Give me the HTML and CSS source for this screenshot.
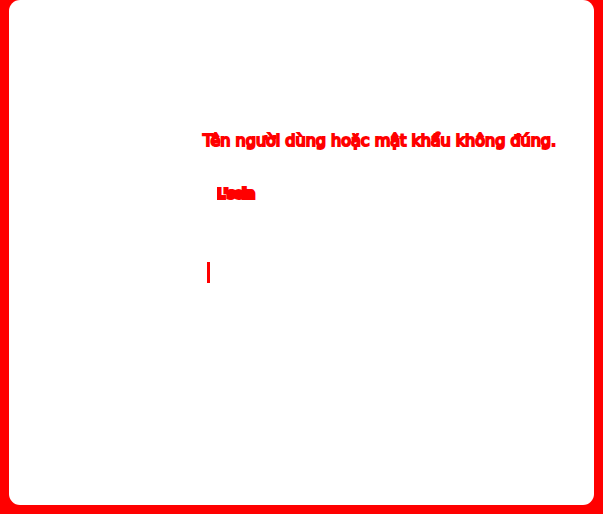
FILE: index.html
```html
<!DOCTYPE html>
<html lang="vi">
<head>
<meta charset="utf-8">
<title>Login</title>
<link rel="stylesheet" href="styles.css">
</head>
<body>
<main class="panel">
<form class="login">
<p class="error" role="alert">Tên người dùng hoặc mật khẩu không đúng.</p>
<input class="field" type="text" value="L'sein" aria-label="Tên người dùng" spellcheck="false">
<div class="password">
<span class="caret"></span>
<input class="field" type="password" aria-label="Mật khẩu">
</div>
</form>
</main>
</body>
</html>
```

FILE: styles.css
```css
* {
  box-sizing: border-box;
}

body {
  margin: 0;
  min-height: 100vh;
  display: flex;
  padding: 0 9px 9px;
  background: #ff0000;
  color: #ff0000;
  font-family: "DejaVu Sans", Verdana, sans-serif;
}

.panel {
  flex: 1;
  padding: 129px 32px 0 194px;
  background: #ffffff;
  border-radius: 11px;
}

.login {
  display: flex;
  flex-direction: column;
}

.error {
  margin: 0 0 26px;
  font-size: 16px;
  line-height: 24px;
  white-space: nowrap;
  -webkit-text-stroke: 2px #ff0000;
}

.field {
  width: 100%;
  height: 28px;
  margin: 0;
  padding: 0 14px;
  border: 0;
  outline: 0;
  background: transparent;
  color: #ff0000;
  font-family: inherit;
  font-size: 13px;
  -webkit-text-stroke: 4px #ff0000;
}

.password {
  display: flex;
  align-items: center;
  margin-top: 51px;
  height: 28px;
  padding-left: 4px;
}

.caret {
  flex: none;
  width: 3px;
  height: 21px;
  background: #ff0000;
}
```
